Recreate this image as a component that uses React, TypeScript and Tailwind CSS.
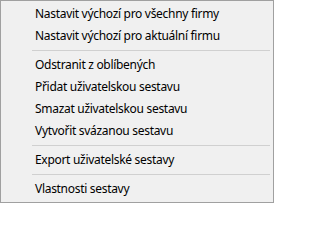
const groups: string[][] = [
  ["Nastavit výchozí pro všechny firmy", "Nastavit výchozí pro aktuální firmu"],
  [
    "Odstranit z oblíbených",
    "Přidat uživatelskou sestavu",
    "Smazat uživatelskou sestavu",
    "Vytvořit svázanou sestavu",
  ],
  ["Export uživatelské sestavy"],
  ["Vlastnosti sestavy"],
];

export default function App() {
  return (
    <div
      className="w-[274px] h-[203px] bg-[#f0f0f0] border border-[#a0a0a0] p-[2px] text-[12px] tracking-[-0.3px] text-black"
      style={{ fontFamily: '"Segoe UI", "Noto Sans", sans-serif' }}
    >
      {groups.map((items, gi) => (
        <div key={gi}>
          {gi > 0 && (
            <div className="h-[7px] flex items-center pl-[29px] pr-[1px]">
              <div className="h-px w-full bg-[#d0d0d0]" />
            </div>
          )}
          {items.map((label) => (
            <div key={label} className="h-[22px] flex items-center pl-[32px]">
              {label}
            </div>
          ))}
        </div>
      ))}
    </div>
  );
}
